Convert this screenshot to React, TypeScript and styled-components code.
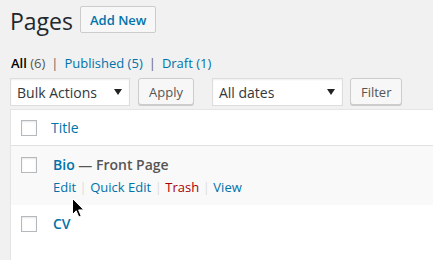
import React from "react";
import styled, { createGlobalStyle } from "styled-components";

const Global = createGlobalStyle`
  html, body {
    margin: 0;
    padding: 0;
    background: #f1f1f1;
    font-family: "Open Sans", "Liberation Sans", sans-serif;
    color: #444;
    font-size: 13px;
    overflow: hidden;
  }
`;

const Wrap = styled.div`
  position: relative;
  width: 433px;
  height: 260px;
  padding-left: 10px;
  box-sizing: border-box;
  overflow: hidden;
`;

const Header = styled.div`
  display: flex;
  align-items: flex-start;
  padding-top: 5px;
  height: 45px;
`;

const Heading = styled.h1`
  margin: 0;
  font-size: 23px;
  font-weight: 400;
  line-height: 32px;
  color: #23282d;
`;

const AddNew = styled.a`
  margin-left: 7px;
  margin-top: 1px;
  height: 27px;
  box-sizing: border-box;
  padding: 0 9px;
  display: flex;
  align-items: center;
  border: 1px solid #ccc;
  border-radius: 2px;
  background: #f7f7f7;
  color: #0073aa;
  font-size: 13px;
  font-weight: 600;
  text-decoration: none;
`;

const SubList = styled.ul`
  list-style: none;
  margin: 0;
  padding: 0 0 0 1px;
  display: flex;
  height: 26px;
  align-items: center;
  font-size: 13px;
  color: #666;
`;

const SubItem = styled.li<{ $current?: boolean }>`
  a {
    color: ${(p) => (p.$current ? "#000" : "#0073aa")};
    font-weight: ${(p) => (p.$current ? 600 : 400)};
    text-decoration: none;
  }
  .count {
    color: ${(p) => (p.$current ? "#555" : "#0073aa")};
  }
`;

const Sep = styled.span`
  color: #666;
  padding: 0 6px;
`;

const Toolbar = styled.div`
  display: flex;
  align-items: flex-start;
  margin-top: 2px;
  height: 31px;
`;

const Select = styled.div<{ $w: number; $gap: number }>`
  width: ${(p) => p.$w}px;
  margin-right: ${(p) => p.$gap}px;
  height: 28px;
  box-sizing: border-box;
  border: 1px solid #ddd;
  box-shadow: inset 0 1px 2px rgba(0, 0, 0, 0.07);
  background: #fff;
  display: flex;
  align-items: center;
  justify-content: space-between;
  padding: 0 7px 0 6px;
  font-size: 14px;
  color: #32373c;
`;

const Button = styled.div<{ $gap: number }>`
  height: 27px;
  box-sizing: border-box;
  padding: 0 10px;
  margin-right: ${(p) => p.$gap}px;
  border: 1px solid #ccc;
  border-radius: 3px;
  background: #f7f7f7;
  box-shadow: 0 1px 0 #ccc;
  color: #555;
  font-size: 13px;
  display: flex;
  align-items: center;
`;

const Table = styled.div`
  background: #fff;
  border: 1px solid #e5e5e5;
  border-right: none;
  box-shadow: 0 1px 1px rgba(0, 0, 0, 0.04);
  height: 200px;
`;

const Row = styled.div<{ $alt?: boolean; $head?: boolean; $h: number }>`
  display: flex;
  align-items: flex-start;
  height: ${(p) => p.$h}px;
  box-sizing: border-box;
  background: ${(p) => (p.$alt ? "#f9f9f9" : "#fff")};
  border-bottom: ${(p) => (p.$head ? "1px solid #e1e1e1" : "none")};
`;

const CheckCell = styled.div<{ $top: number }>`
  width: 40px;
  padding-top: ${(p) => p.$top}px;
  padding-left: 10px;
  box-sizing: border-box;
`;

const Check = styled.span`
  display: block;
  width: 16px;
  height: 16px;
  box-sizing: border-box;
  border: 1px solid #b4b9be;
  background: #fff;
  box-shadow: inset 0 1px 2px rgba(0, 0, 0, 0.1);
`;

const TitleCell = styled.div<{ $top: number; $left: number }>`
  padding-top: ${(p) => p.$top}px;
  padding-left: ${(p) => p.$left}px;
`;

const HeadLink = styled.a`
  color: #0073aa;
  font-size: 14px;
  line-height: 20px;
  text-decoration: none;
`;

const RowTitle = styled.div`
  font-size: 14px;
  font-weight: 600;
  line-height: 20px;
  a {
    color: #0073aa;
    text-decoration: none;
  }
  .state {
    color: #555;
  }
`;

const Actions = styled.div`
  margin-top: 2px;
  font-size: 13px;
  line-height: 20px;
  display: flex;
`;

const Action = styled.a<{ $danger?: boolean }>`
  color: ${(p) => (p.$danger ? "#a00" : "#0073aa")};
  text-decoration: none;
`;

const Pipe = styled.span`
  color: #ddd;
  padding: 0 3.5px;
`;

const Cursor = styled.svg`
  position: absolute;
  left: 72px;
  top: 198px;
`;

const Arrow = () => (
  <svg width="8" height="6" viewBox="0 0 8 6">
    <path d="M0 0h8L4 6z" fill="#222" />
  </svg>
);

export default function App() {
  return (
    <Wrap>
      <Global />
      <Header>
        <Heading>Pages</Heading>
        <AddNew>Add New</AddNew>
      </Header>
      <SubList>
        <SubItem $current>
          <a>All</a> <span className="count">(6)</span>
          <Sep>|</Sep>
        </SubItem>
        <SubItem>
          <a>
            Published <span className="count">(5)</span>
          </a>
          <Sep>|</Sep>
        </SubItem>
        <SubItem>
          <a>
            Draft <span className="count">(1)</span>
          </a>
        </SubItem>
      </SubList>
      <Toolbar>
        <Select $w={120} $gap={8}>
          Bulk Actions <Arrow />
        </Select>
        <Button $gap={18}>Apply</Button>
        <Select $w={131} $gap={7}>
          All dates <Arrow />
        </Select>
        <Button $gap={0}>Filter</Button>
      </Toolbar>
      <Table>
        <Row $head $h={36}>
          <CheckCell $top={10}>
            <Check />
          </CheckCell>
          <TitleCell $top={8} $left={0}>
            <HeadLink>Title</HeadLink>
          </TitleCell>
        </Row>
        <Row $alt $h={59}>
          <CheckCell $top={11}>
            <Check />
          </CheckCell>
          <TitleCell $top={9} $left={2}>
            <RowTitle>
              <a>Bio</a>
              <span className="state"> — Front Page</span>
            </RowTitle>
            <Actions>
              <Action>Edit</Action>
              <Pipe>|</Pipe>
              <Action>Quick Edit</Action>
              <Pipe>|</Pipe>
              <Action $danger>Trash</Action>
              <Pipe>|</Pipe>
              <Action>View</Action>
            </Actions>
          </TitleCell>
        </Row>
        <Row $h={60}>
          <CheckCell $top={11}>
            <Check />
          </CheckCell>
          <TitleCell $top={9} $left={2}>
            <RowTitle>
              <a>CV</a>
            </RowTitle>
          </TitleCell>
        </Row>
      </Table>
      <Cursor width="13" height="21" viewBox="0 0 13 21">
        <path
          d="M0.5 0.5 L0.5 16.5 L4.2 12.8 L6.8 19 L9.2 18 L6.6 11.9 L11.8 11.9 Z"
          fill="#000"
          stroke="#fff"
          strokeWidth="1"
          strokeLinejoin="round"
        />
      </Cursor>
    </Wrap>
  );
}
